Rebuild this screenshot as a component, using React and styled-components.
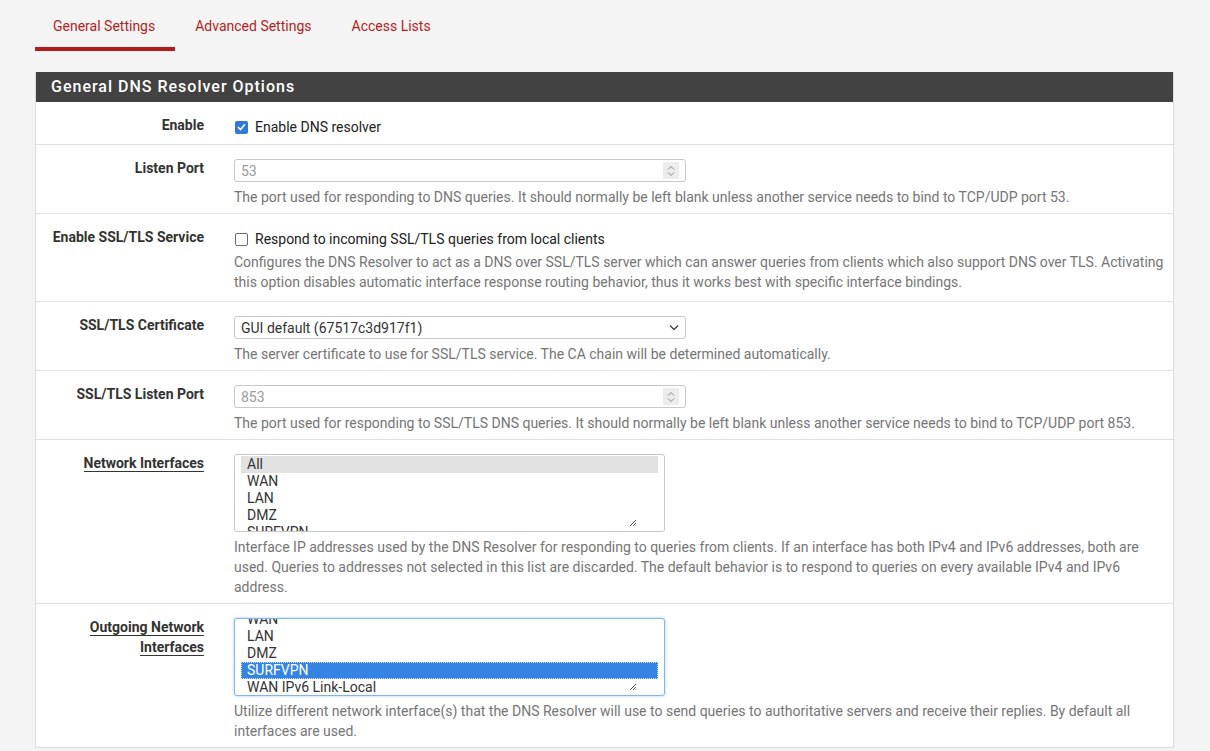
import styled, { createGlobalStyle } from "styled-components"

const GlobalStyle = createGlobalStyle`
  html, body { margin: 0; padding: 0; background: #f4f4f4; }
  body { font-family: Roboto, "Liberation Sans", sans-serif; font-size: 14px; color: #212121; }
  * { box-sizing: border-box; }
`

const Page = styled.div`
  padding: 0 36px 0 35px;
`

const Tabs = styled.nav`
  display: flex;
  height: 51px;
  margin-bottom: 21px;
`

const Tab = styled.div`
  padding: 0 20px;
  height: 51px;
  color: #b71c1c;
  font-size: 14px;
  border-bottom: 4px solid ${(p) => (p.active ? "#b71c1c" : "transparent")};
  &:first-child { padding-left: 18px; }
  span { display: block; line-height: 20px; margin-top: 16px; }
`

const Panel = styled.section`
  background: #fff;
  border: 1px solid #dcdcdc;
  border-top: none;
`

const PanelHeading = styled.h2`
  margin: 0;
  height: 30px;
  background: #424242;
  color: #fff;
  font-size: 16px;
  font-weight: 500;
  letter-spacing: 1px;
  padding: 0 15px;
  line-height: 29px;
`

const Row = styled.div`
  display: grid;
  grid-template-columns: 183px 1fr;
  border-top: 1px solid #e0e0e0;
  padding: 14px 0 6px;
  &:first-of-type { border-top: none; }
`

const Label = styled.div`
  text-align: right;
  padding: 0 15px 0 0;
  font-weight: 700;
  color: #333;
  line-height: 20px;
  margin-top: -1px;
  span {
    border-bottom: ${(p) => (p.link ? "1px solid #333" : "none")};
  }
`

const Content = styled.div`
  padding: 0 8px 0 15px;
`

const CheckLine = styled.label`
  display: flex;
  align-items: center;
  gap: 7px;
  height: 22px;
  padding-left: 1px;
`

const Box = styled.span`
  width: 13px;
  height: 13px;
  border-radius: 2px;
  display: inline-flex;
  align-items: center;
  justify-content: center;
  background: ${(p) => (p.checked ? "#2f79dd" : "#fff")};
  border: ${(p) => (p.checked ? "none" : "1.5px solid #6b6b6b")};
`

const Help = styled.div`
  color: #757575;
  line-height: 20px;
  margin-top: ${(p) => (p.tight ? 2 : 5)}px;
  margin-bottom: ${(p) => (p.tight ? 3 : 0)}px;
`

const Field = styled.div`
  width: 452px;
  height: 23px;
  border: 1px solid #c8c8c8;
  border-radius: 3px;
  display: flex;
  align-items: center;
  justify-content: space-between;
  padding: 0 6px;
  color: ${(p) => (p.muted ? "#9a9a9a" : "#333")};
  background: #fff;
`

const Spinner = styled.div`
  width: 16px;
  height: 17px;
  background: #ececec;
  display: flex;
  align-items: center;
  justify-content: center;
`

const List = styled.div`
  position: relative;
  width: 431px;
  height: 78px;
  margin-bottom: 2px;
  border: 1px solid ${(p) => (p.focus ? "#82b5ea" : "#c8c8c8")};
  box-shadow: ${(p) => (p.focus ? "0 0 3px rgba(80,150,230,0.5)" : "none")};
  border-radius: 3px;
  overflow: hidden;
  padding: 1px 6px 0;
  background: #fff;
`

const ListInner = styled.div`
  margin-top: ${(p) => p.offset || 0}px;
`

const Option = styled.div`
  height: 17px;
  line-height: 17px;
  padding-left: 6px;
  color: ${(p) => (p.selected ? "#fff" : "#333")};
  background: ${(p) => (p.selected ? "#3584e4" : p.grey ? "#e2e2e2" : "transparent")};
  outline: ${(p) => (p.selected ? "1px dotted #cfe3fb" : "none")};
  outline-offset: -1px;
`

const Grip = styled.svg`
  position: absolute;
  right: 27px;
  bottom: 4px;
`

function Check({ checked }) {
  return (
    <Box checked={checked}>
      {checked && (
        <svg width="9" height="8" viewBox="0 0 9 8">
          <path d="M1 4.2 L3.5 6.5 L8 1.3" stroke="#fff" strokeWidth="1.6" fill="none" />
        </svg>
      )}
    </Box>
  )
}

function NumberField({ value }) {
  return (
    <Field muted>
      <span>{value}</span>
      <Spinner>
        <svg width="8" height="12" viewBox="0 0 8 12">
          <path d="M1 4.5 L4 1.5 L7 4.5 M1 7.5 L4 10.5 L7 7.5" stroke="#8a8a8a" strokeWidth="1" fill="none" />
        </svg>
      </Spinner>
    </Field>
  )
}

function SelectField({ value }) {
  return (
    <Field>
      <span>{value}</span>
      <svg width="10" height="7" viewBox="0 0 10 7">
        <path d="M1 1.5 L5 5.5 L9 1.5" stroke="#444" strokeWidth="1.4" fill="none" />
      </svg>
    </Field>
  )
}

function MultiList({ items, offset, focus }) {
  return (
    <List focus={focus}>
      <ListInner offset={offset}>
        {items.map((it) => (
          <Option key={it.name} grey={it.grey} selected={it.selected}>{it.name}</Option>
        ))}
      </ListInner>
      <Grip width="8" height="8" viewBox="0 0 8 8">
        <path d="M7 1 L1 7 M7 4 L4 7 M7 6.5 L6.5 7" stroke="#555" strokeWidth="1" />
      </Grip>
    </List>
  )
}

export default function App() {
  return (
    <Page>
      <GlobalStyle />
      <Tabs>
        <Tab active><span>General Settings</span></Tab>
        <Tab><span>Advanced Settings</span></Tab>
        <Tab><span>Access Lists</span></Tab>
      </Tabs>
      <Panel>
        <PanelHeading>General DNS Resolver Options</PanelHeading>
        <div>
          <Row>
            <Label><span>Enable</span></Label>
            <Content>
              <CheckLine><Check checked />Enable DNS resolver</CheckLine>
            </Content>
          </Row>
          <Row>
            <Label><span>Listen Port</span></Label>
            <Content>
              <NumberField value="53" />
              <Help>The port used for responding to DNS queries. It should normally be left blank unless another service needs to bind to TCP/UDP port 53.</Help>
            </Content>
          </Row>
          <Row>
            <Label><span>Enable SSL/TLS Service</span></Label>
            <Content>
              <CheckLine><Check />Respond to incoming SSL/TLS queries from local clients</CheckLine>
              <Help tight>Configures the DNS Resolver to act as a DNS over SSL/TLS server which can answer queries from clients which also support DNS over TLS. Activating this option disables automatic interface response routing behavior, thus it works best with specific interface bindings.</Help>
            </Content>
          </Row>
          <Row>
            <Label><span>SSL/TLS Certificate</span></Label>
            <Content>
              <SelectField value="GUI default (67517c3d917f1)" />
              <Help>The server certificate to use for SSL/TLS service. The CA chain will be determined automatically.</Help>
            </Content>
          </Row>
          <Row>
            <Label><span>SSL/TLS Listen Port</span></Label>
            <Content>
              <NumberField value="853" />
              <Help>The port used for responding to SSL/TLS DNS queries. It should normally be left blank unless another service needs to bind to TCP/UDP port 853.</Help>
            </Content>
          </Row>
          <Row>
            <Label link><span>Network Interfaces</span></Label>
            <Content>
              <MultiList
                offset={0}
                items={[
                  { name: "All", grey: true },
                  { name: "WAN" },
                  { name: "LAN" },
                  { name: "DMZ" },
                  { name: "SURFVPN" },
                  { name: "WAN IPv6 Link-Local" },
                ]}
              />
              <Help>Interface IP addresses used by the DNS Resolver for responding to queries from clients. If an interface has both IPv4 and IPv6 addresses, both are used. Queries to addresses not selected in this list are discarded. The default behavior is to respond to queries on every available IPv4 and IPv6 address.</Help>
            </Content>
          </Row>
          <Row>
            <Label link><span>Outgoing Network<br />Interfaces</span></Label>
            <Content>
              <MultiList
                focus
                offset={-9}
                items={[
                  { name: "WAN" },
                  { name: "LAN" },
                  { name: "DMZ" },
                  { name: "SURFVPN", selected: true },
                  { name: "WAN IPv6 Link-Local" },
                ]}
              />
              <Help>Utilize different network interface(s) that the DNS Resolver will use to send queries to authoritative servers and receive their replies. By default all interfaces are used.</Help>
            </Content>
          </Row>
        </div>
      </Panel>
    </Page>
  )
}
